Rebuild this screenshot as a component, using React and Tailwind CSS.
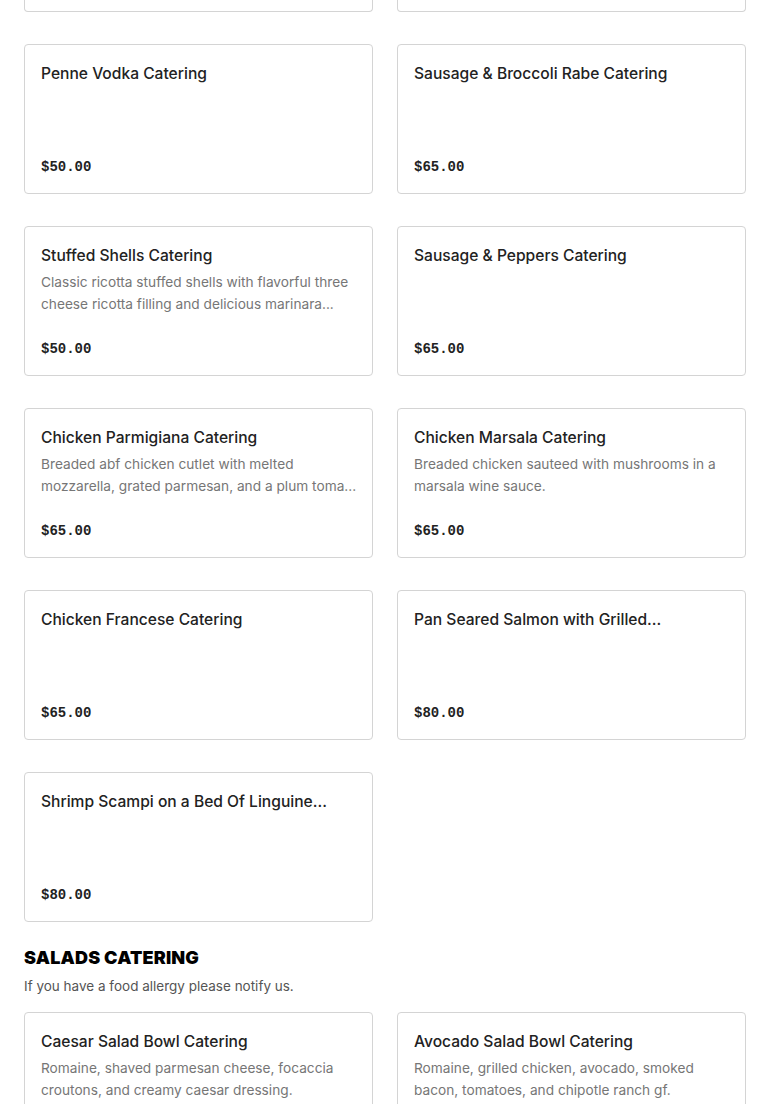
import React from 'react';

const sans = { fontFamily: 'Inter, "Noto Sans", sans-serif' };

const pastas = [
  { name: 'Penne Vodka Catering', price: '$50.00' },
  { name: 'Sausage & Broccoli Rabe Catering', price: '$65.00' },
  {
    name: 'Stuffed Shells Catering',
    desc: ['Classic ricotta stuffed shells with flavorful three', 'cheese ricotta filling and delicious marinara...'],
    price: '$50.00',
  },
  { name: 'Sausage & Peppers Catering', price: '$65.00' },
  {
    name: 'Chicken Parmigiana Catering',
    desc: ['Breaded abf chicken cutlet with melted', 'mozzarella, grated parmesan, and a plum toma...'],
    price: '$65.00',
  },
  {
    name: 'Chicken Marsala Catering',
    desc: ['Breaded chicken sauteed with mushrooms in a', 'marsala wine sauce.'],
    price: '$65.00',
  },
  { name: 'Chicken Francese Catering', price: '$65.00' },
  { name: 'Pan Seared Salmon with Grilled...', price: '$80.00' },
  { name: 'Shrimp Scampi on a Bed Of Linguine...', price: '$80.00' },
];

// only the top of these cards is in view
const salads = [
  {
    name: 'Caesar Salad Bowl Catering',
    desc: ['Romaine, shaved parmesan cheese, focaccia', 'croutons, and creamy caesar dressing.'],
  },
  {
    name: 'Avocado Salad Bowl Catering',
    desc: ['Romaine, grilled chicken, avocado, smoked', 'bacon, tomatoes, and chipotle ranch gf.'],
  },
];

const Card = ({ item }) => (
  <div className="h-[150px] border border-[#d4d4d4] rounded-[4px] bg-white px-4 pt-[17px] pb-[14px] flex flex-col">
    <div className="text-[15.6px] leading-[24px] font-medium text-[#222] whitespace-nowrap overflow-hidden">
      {item.name}
    </div>
    {item.desc && (
      <div className="mt-[3px] text-[13.7px] leading-[22px] text-[#767676]">
        {item.desc.map((line, i) => (
          <div key={i} className="whitespace-nowrap overflow-hidden">{line}</div>
        ))}
      </div>
    )}
    {item.price && (
      <div
        className="mt-auto text-[14px] leading-[24px] font-bold text-[#222]"
        style={{ fontFamily: '"Liberation Mono", "DejaVu Sans Mono", monospace' }}
      >
        {item.price}
      </div>
    )}
  </div>
);

const App = () => {
  return (
    <div className="bg-white px-6 pb-10" style={sans}>
      <div className="grid grid-cols-2 gap-x-6 gap-y-8">
        <div className="h-[12px] border-x border-b border-[#d4d4d4] rounded-b-[4px]" />
        <div className="h-[12px] border-x border-b border-[#d4d4d4] rounded-b-[4px]" />
        {pastas.map((p, i) => (
          <Card key={i} item={p} />
        ))}
      </div>

      <h2 className="mt-6 text-[18px] leading-[24px] font-black text-black tracking-[0.01em]">SALADS CATERING</h2>
      <p className="mt-[5px] text-[13.5px] leading-[22px] text-[#555]">If you have a food allergy please notify us.</p>

      <div className="mt-[15px] grid grid-cols-2 gap-x-6 gap-y-8">
        {salads.map((s, i) => (
          <Card key={i} item={s} />
        ))}
      </div>
    </div>
  );
};

export default App;
